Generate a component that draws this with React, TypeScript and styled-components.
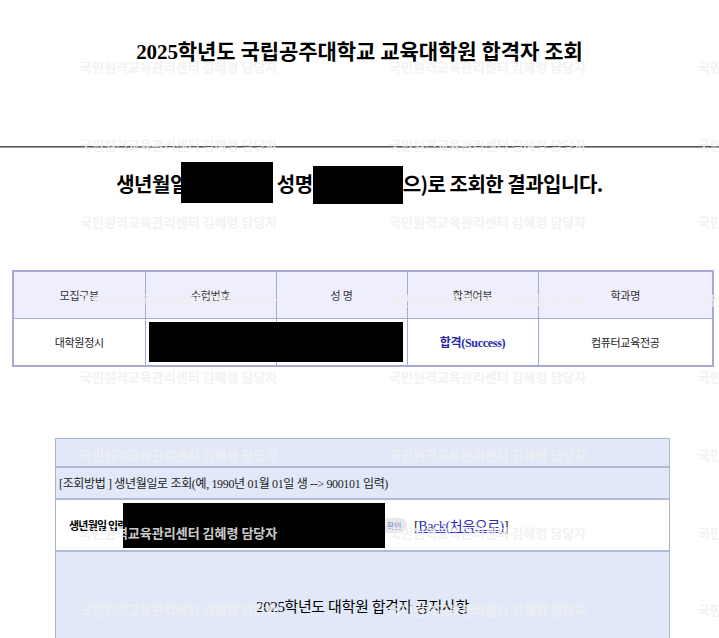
import React from "react"
import styled, { createGlobalStyle } from "styled-components"

const GlobalStyle = createGlobalStyle`
  html, body {
    margin: 0;
    padding: 0;
    background: #fff;
  }
  body {
    font-family: "Liberation Serif", "Noto Sans CJK KR", serif;
    color: #000;
  }
`

const Page = styled.div`
  position: relative;
  width: 719px;
  height: 638px;
  overflow: hidden;
`

const Title = styled.h1`
  margin: 0;
  padding-top: 40px;
  font-size: 21px;
  line-height: 24px;
  letter-spacing: -0.1px;
  text-align: center;
  font-weight: bold;
`

const Rule = styled.hr`
  margin: 82px 0 0;
  height: 0;
  border: none;
  border-top: 1px solid #555;
  border-bottom: 1px solid #999;
`

const Summary = styled.p`
  margin: 14px 0 0;
  height: 42px;
  display: flex;
  justify-content: center;
  align-items: center;
  font-family: "Noto Sans CJK KR", "Liberation Sans", sans-serif;
  font-size: 20px;
  font-weight: bold;
  letter-spacing: -0.5px;
  white-space: pre;
`

const Blackout = styled.span<{ $w: number; $h: number; $align?: string }>`
  display: inline-block;
  flex: none;
  width: ${(p) => p.$w}px;
  height: ${(p) => p.$h}px;
  align-self: ${(p) => p.$align || "center"};
  background: #000;
`

const ResultTable = styled.table`
  margin: 66px 0 0 12px;
  width: 700px;
  border-collapse: collapse;
  table-layout: fixed;
  border: 2px solid #a9a9d6;
  font-size: 11px;
  letter-spacing: -0.3px;
`

const Th = styled.th`
  height: 46px;
  padding: 0;
  border: 1px solid #a9a9d6;
  background: #eeeefc;
  color: #333;
  font-weight: normal;
`

const Td = styled.td<{ $pass?: boolean }>`
  position: relative;
  height: 46px;
  padding: 0;
  border: 1px solid #a9a9d6;
  text-align: center;
  color: ${(p) => (p.$pass ? "#2727a8" : "#222")};
  font-weight: ${(p) => (p.$pass ? "bold" : "normal")};
  font-size: ${(p) => (p.$pass ? "12px" : "11px")};
`

const CellCover = styled.div`
  position: absolute;
  left: 3px;
  top: 3px;
  width: 254px;
  height: 40px;
  background: #000;
  z-index: 2;
`

const Panel = styled.div`
  margin: 71px 0 0 55px;
  width: 613px;
  border: 1px solid #a9b4cd;
  border-bottom: none;
`

const PanelRow = styled.div<{ $h: number; $white?: boolean; $center?: boolean }>`
  position: relative;
  height: ${(p) => p.$h}px;
  display: flex;
  align-items: center;
  justify-content: ${(p) => (p.$center ? "center" : "flex-start")};
  background: ${(p) => (p.$white ? "#fff" : "#e1e9f9")};
  & + & {
    border-top: 2px solid #b1bcd4;
  }
`

const Guide = styled.span`
  padding-left: 3px;
  font-size: 12px;
  letter-spacing: -0.35px;
  color: #222;
`

const SearchForm = styled.div`
  display: flex;
  align-items: center;
  padding-left: 13px;
`

const Label = styled.span`
  font-family: "Noto Sans CJK KR", sans-serif;
  font-size: 11px;
  font-weight: bold;
  letter-spacing: -0.8px;
  width: 76px;
  white-space: nowrap;
`

const BirthInput = styled.input`
  width: 226px;
  height: 16px;
  margin: 0 4px 0 0;
  border: 1px solid #999;
`

const ConfirmButton = styled.button`
  width: 26px;
  height: 15px;
  padding: 0;
  border: none;
  border-radius: 8px;
  background: #e8e8e8;
  color: #6f8fd6;
  font-family: "Noto Sans CJK KR", sans-serif;
  font-size: 8px;
  line-height: 15px;
`

const BackLink = styled.span`
  margin-left: 7px;
  font-size: 14px;
  letter-spacing: -0.4px;
  color: #222;

  & a {
    color: #2d2db4;
    text-decoration: underline;
  }
`

const FormCover = styled.div`
  position: absolute;
  left: 67px;
  top: 3px;
  width: 262px;
  height: 45px;
  background: #000;
`

const Notice = styled.span`
  align-self: flex-start;
  margin-top: 45px;
  font-size: 15px;
  line-height: 20px;
  letter-spacing: -0.4px;
`

const Watermark = styled.div`
  position: absolute;
  top: 59px;
  left: -229px;
  display: grid;
  grid-template-columns: repeat(4, 309px);
  grid-auto-rows: 77.6px;
  pointer-events: none;
  z-index: 10;
`

const Mark = styled.span`
  font-family: "Noto Sans CJK KR", sans-serif;
  font-size: 13px;
  font-weight: bold;
  line-height: 16px;
  color: rgba(240, 240, 240, 0.86);
  white-space: nowrap;
`

const columns = [132, 131, 131, 131, 175]

export default function App() {
  const marks = Array.from({ length: 32 })

  return (
    <Page>
      <GlobalStyle />
      <Title>2025학년도 국립공주대학교 교육대학원 합격자 조회</Title>
      <Rule />

      <Summary>
        생년월일
        <Blackout $w={92} $h={41} $align="flex-start" style={{ marginLeft: -7 }} />
        {" 성명"}
        <Blackout $w={90} $h={38} $align="flex-end" />
        으)로 조회한 결과입니다.
      </Summary>

      <ResultTable>
        <colgroup>
          {columns.map((w, i) => (
            <col key={i} style={{ width: w }} />
          ))}
        </colgroup>
        <thead>
          <tr>
            <Th>모집구분</Th>
            <Th>수험번호</Th>
            <Th>성 명</Th>
            <Th>합격여부</Th>
            <Th>학과명</Th>
          </tr>
        </thead>
        <tbody>
          <tr>
            <Td>대학원정시</Td>
            <Td>
              <CellCover />
            </Td>
            <Td />
            <Td $pass>합격(Success)</Td>
            <Td>컴퓨터교육전공</Td>
          </tr>
        </tbody>
      </ResultTable>

      <Panel>
        <PanelRow $h={27} />
        <PanelRow $h={30}>
          <Guide>[조회방법 ] 생년월일로 조회(예, 1990년 01월 01일 생 --&gt; 900101 입력)</Guide>
        </PanelRow>
        <PanelRow $h={50} $white>
          <SearchForm>
            <Label>생년월일 입력 :</Label>
            <BirthInput type="text" />
            <ConfirmButton type="button">확인</ConfirmButton>
            <BackLink>
              [<a href="#">Back(처음으로)</a>]
            </BackLink>
          </SearchForm>
          <FormCover />
        </PanelRow>
        <PanelRow $h={100} $center>
          <Notice>2025학년도 대학원 합격자 공지사항</Notice>
        </PanelRow>
      </Panel>

      <Watermark>
        {marks.map((_, i) => (
          <Mark key={i}>국민원격교육관리센터 김혜령 담당자</Mark>
        ))}
      </Watermark>
    </Page>
  )
}
